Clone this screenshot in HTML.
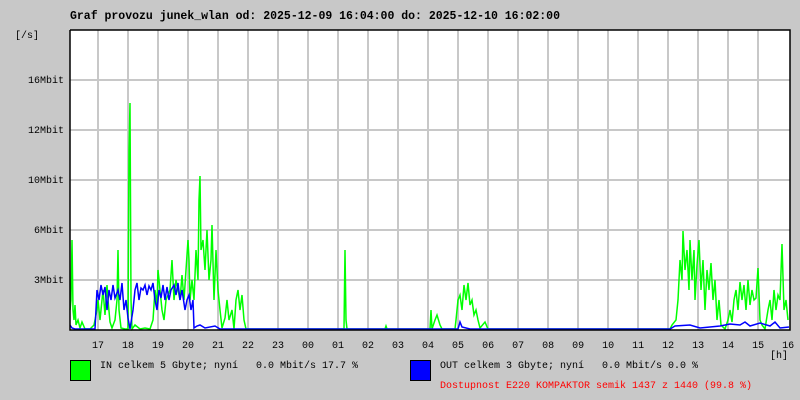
<!DOCTYPE html>
<html><head><meta charset="utf-8"><style>
html,body{margin:0;padding:0}
body{width:800px;height:400px;background:#c8c8c8;position:relative;overflow:hidden;font-family:"Liberation Mono",monospace;color:#000}
.t{position:absolute;white-space:pre;font-size:10px;line-height:12px}
</style></head><body>
<div class="t" style="left:70px;top:11px;font-size:11.5px;font-weight:bold">Graf provozu junek_wlan od: 2025-12-09 16:04:00 do: 2025-12-10 16:02:00</div>
<div class="t" style="left:15px;top:31px">[/s]</div>
<div class="t" style="left:28px;top:76px">16Mbit</div>
<div class="t" style="left:28px;top:126px">12Mbit</div>
<div class="t" style="left:28px;top:176px">10Mbit</div>
<div class="t" style="left:34px;top:226px">6Mbit</div>
<div class="t" style="left:34px;top:276px">3Mbit</div>
<svg style="position:absolute;left:0;top:0" width="800" height="400">
<rect x="70" y="30" width="720" height="300" fill="#fff"/>
<g stroke="#c8c8c8" stroke-width="2">
<path d="M98 30V330M128 30V330M158 30V330M188 30V330M218 30V330M248 30V330M278 30V330M308 30V330M338 30V330M368 30V330M398 30V330M428 30V330M458 30V330M488 30V330M518 30V330M548 30V330M578 30V330M608 30V330M638 30V330M668 30V330M698 30V330M728 30V330M758 30V330M70 80H790M70 130H790M70 180H790M70 230H790M70 280H790"/>
</g>
<polyline fill="none" stroke="#00ff00" stroke-width="1.5" points="70,310 71,300 72,240 73,310 74,320 75,305 76,325 78,320 80,328 82,322 85,329 90,329 94,325 97,310 98,300 100,320 103,290 105,315 107,285 108,300 110,322 112,328 115,320 117,300 118,250 119,310 121,328 125,329 128,329 129,150 130,103 131,300 132,329 135,325 140,329 145,328 150,329 153,320 155,290 157,305 158,270 160,290 162,310 164,320 166,300 170,290 172,260 174,300 176,280 178,290 180,300 182,275 184,300 186,270 188,240 189,260 190,300 192,280 194,300 196,250 198,280 199,200 200,176 201,250 203,240 205,270 207,230 209,280 211,260 212,225 214,300 216,250 218,290 220,310 222,328 225,318 227,300 229,320 232,310 234,329 236,300 238,290 240,310 242,295 244,320 246,329 344,329 345,250 346,320 347,329 385,329 386,326 387,329 430,329 431,310 432,329 435,320 437,315 440,325 442,329 455,329 456,320 458,300 460,295 462,310 464,285 466,300 468,283 470,305 472,300 474,315 476,310 478,320 480,328 485,322 488,329 670,329 672,325 676,320 678,300 680,260 682,280 683,231 685,270 687,250 689,290 690,240 692,280 694,250 695,300 697,265 699,240 701,290 703,260 705,310 707,270 709,290 711,263 713,300 715,280 717,320 719,300 721,325 725,329 728,320 730,310 732,322 734,300 736,290 738,310 740,282 742,300 744,285 746,310 748,280 750,305 752,290 754,300 756,298 758,268 760,320 762,325 765,329 768,310 770,300 772,320 774,290 776,310 778,295 780,300 782,244 784,310 786,300 788,320"/>
<polyline fill="none" stroke="#0000ff" stroke-width="1.5" points="70,325 72,328 75,329 95,329 97,290 99,300 101,285 103,295 105,287 107,310 109,290 111,300 113,285 115,298 118,290 120,300 122,283 124,310 126,300 128,318 130,329 133,310 135,290 137,283 139,300 141,288 143,290 145,285 147,295 149,286 151,290 153,283 155,300 157,310 159,290 161,298 163,285 165,300 167,287 169,300 171,290 174,285 176,295 178,283 180,300 182,290 185,310 187,300 189,295 191,310 193,300 194,328 197,326 200,325 205,328 215,326 220,329 458,329 460,322 462,327 470,329 670,329 675,326 690,325 700,328 720,326 730,324 740,325 745,322 750,326 760,323 770,326 775,322 780,328 789,327"/>
<path d="M70 30V330H790V30H70" fill="none" stroke="#000" stroke-width="1.5"/>
<rect x="70.5" y="360.5" width="20" height="20" fill="#00ff00" stroke="#000"/>
<rect x="410.5" y="360.5" width="20" height="20" fill="#0000ff" stroke="#000"/>
</svg>
<div class="t" style="left:92px;top:341px">17   18   19   20   21   22   23   00   01   02   03   04   05   06   07   08   09   10   11   12   13   14   15   16</div>
<div class="t" style="left:770px;top:351px">[h]</div>
<div class="t" style="left:100px;top:361px">IN celkem 5 Gbyte; nyní   0.0 Mbit/s 17.7 %</div>
<div class="t" style="left:440px;top:361px">OUT celkem 3 Gbyte; nyní   0.0 Mbit/s 0.0 %</div>
<div class="t" style="left:440px;top:381px;color:#ff0000">Dostupnost E220 KOMPAKTOR semik 1437 z 1440 (99.8 %)</div>
</body></html>
